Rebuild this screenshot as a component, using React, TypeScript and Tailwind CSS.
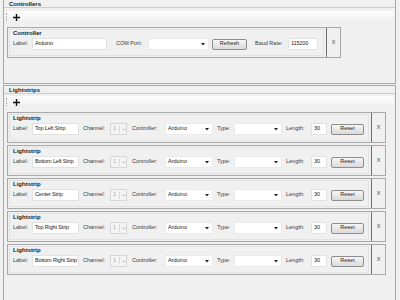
import React from "react";

function TextBox({ w, value }: { w: string; value: string }) {
  return (
    <div
      className={`${w} h-[12px] shrink-0 bg-white border border-[#e2e2e2] flex items-center pl-[2px] text-[5.5px] leading-none tracking-[-0.15px] text-[#1a1a1a] whitespace-nowrap overflow-hidden`}
    >
      {value}
    </div>
  );
}

function Combo({ w, value }: { w: string; value: string }) {
  return (
    <div
      className={`${w} h-[12px] shrink-0 bg-white border border-[#ebebeb] flex items-center pl-[2px] pr-[3px] text-[5.5px] leading-none text-[#1a1a1a]`}
    >
      <span className="flex-1 whitespace-nowrap">{value}</span>
      <svg width="4" height="3" viewBox="0 0 4 3">
        <path d="M0 0H4L2 2.5Z" fill="#222" />
      </svg>
    </div>
  );
}

function ChannelBox() {
  return (
    <div className="w-[17px] h-[12px] shrink-0 bg-[#f4f4f4] border border-[#d6d6d6] flex items-center text-[5.5px] leading-none text-[#a8a8a8]">
      <span className="pl-[2px] w-[8px]">1</span>
      <div className="w-px h-[8px] bg-[#dadada]" />
      <svg className="ml-[2px]" width="4" height="3" viewBox="0 0 4 3">
        <path d="M0.4 0.5L2 2.2L3.6 0.5" stroke="#a8a8a8" strokeWidth="0.8" fill="none" />
      </svg>
    </div>
  );
}

function Btn({ w, children }: { w: string; children: React.ReactNode }) {
  return (
    <div
      className={`${w} h-[11px] shrink-0 border border-[#8d8d8d] rounded-[2px] bg-linear-to-b from-[#f6f6f6] to-[#dadada] flex items-center justify-center text-[5.5px] leading-none text-[#1a1a1a]`}
    >
      {children}
    </div>
  );
}

function Label({ w, ml, children }: { w: string; ml?: string; children: React.ReactNode }) {
  return (
    <span className={`${w} ${ml ?? ""} shrink-0 text-[5.5px] leading-none text-[#3a3a3a] whitespace-nowrap`}>
      {children}
    </span>
  );
}

function Group({ outerW, title, children }: { outerW: string; title: string; children: React.ReactNode }) {
  return (
    <div className={`${outerW} h-[31px] ml-[3px] flex border border-[#a8a8a8] bg-[#f0f0f0]`}>
      <div className="flex-1 border-r border-[#6f6f6f] pl-[1px] pr-[2px] py-[1px]">
        <div className="h-full border border-[#e2e2e2] pl-[3px]">
          <div className="h-[6px] flex items-center text-[6px] leading-none font-bold text-[#1a1a1a]">{title}</div>
          <div className="mt-[2px] h-[12px] flex items-center">{children}</div>
        </div>
      </div>
      <div className="w-[13px] flex items-center justify-center text-[5.5px] leading-none text-[#444]">X</div>
    </div>
  );
}

function Toolbar({ mt }: { mt: string }) {
  return (
    <div className={`${mt} mx-[1px] h-[12px] bg-linear-to-b from-[#fdfdfd] to-[#eeeeee] flex items-center`}>
      <div className="ml-[1px] h-[8px] w-0 border-l border-dotted border-[#9a9a9a]" />
      <svg className="ml-[6px]" width="7" height="7" viewBox="0 0 7 7">
        <path d="M2.8 0h1.4v7H2.8zM0 2.8h7v1.4H0z" fill="#111" />
      </svg>
    </div>
  );
}

function Lightstrip({ name }: { name: string }) {
  return (
    <Group outerW="w-[379px]" title="Lightstrip">
      <Label w="w-[19px]">Label:</Label>
      <TextBox w="w-[47px]" value={name} />
      <Label w="w-[27px]" ml="ml-[4px]">Channel:</Label>
      <ChannelBox />
      <Label w="w-[33px]" ml="ml-[5px]">Controller:</Label>
      <Combo w="w-[48px]" value="Arduino" />
      <Label w="w-[17px]" ml="ml-[4px]">Type:</Label>
      <Combo w="w-[48px]" value="" />
      <Label w="w-[25px]" ml="ml-[4px]">Length:</Label>
      <TextBox w="w-[16px]" value="30" />
      <div className="ml-[4px]">
        <Btn w="w-[33px]">Reset</Btn>
      </div>
    </Group>
  );
}

export default function App() {
  const strips = ["Top Left Strip", "Bottom Left Strip", "Center Strip", "Top Right Strip", "Bottom Right Strip"];
  return (
    <div className="w-[400px] h-[300px] overflow-hidden bg-[#f0f0f0] [font-family:'Liberation_Sans',Arial,sans-serif]">
      <div className="ml-[3px] mt-[-1px] w-[393px] h-[85px] border border-[#a8a8a8]">
        <div className="h-[8px] border-b border-[#cdcdcd] pl-[5px] flex items-center text-[6px] leading-none font-bold text-[#1a1a1a]">
          Controllers
        </div>
        <Toolbar mt="mt-[3px]" />
        <div className="mt-[4px]">
          <Group outerW="w-[334px]" title="Controller">
            <Label w="w-[19px]">Label:</Label>
            <TextBox w="w-[75px]" value="Arduino" />
            <Label w="w-[32px]" ml="ml-[9px]">COM Port:</Label>
            <Combo w="w-[61px]" value="" />
            <div className="ml-[3px]">
              <Btn w="w-[35px]">Refresh</Btn>
            </div>
            <Label w="w-[33px]" ml="ml-[8px]">Baud Rate:</Label>
            <TextBox w="w-[30px]" value="115200" />
          </Group>
        </div>
      </div>
      <div className="ml-[3px] mt-[1px] w-[393px] h-[240px] border border-[#a8a8a8]">
        <div className="h-[8px] border-b border-[#cdcdcd] pl-[5px] flex items-center text-[6px] leading-none font-bold text-[#1a1a1a]">
          Lightstrips
        </div>
        <Toolbar mt="mt-[2px]" />
        <div className="mt-[4px] flex flex-col gap-[2px]">
          {strips.map((s) => (
            <Lightstrip key={s} name={s} />
          ))}
        </div>
      </div>
    </div>
  );
}
